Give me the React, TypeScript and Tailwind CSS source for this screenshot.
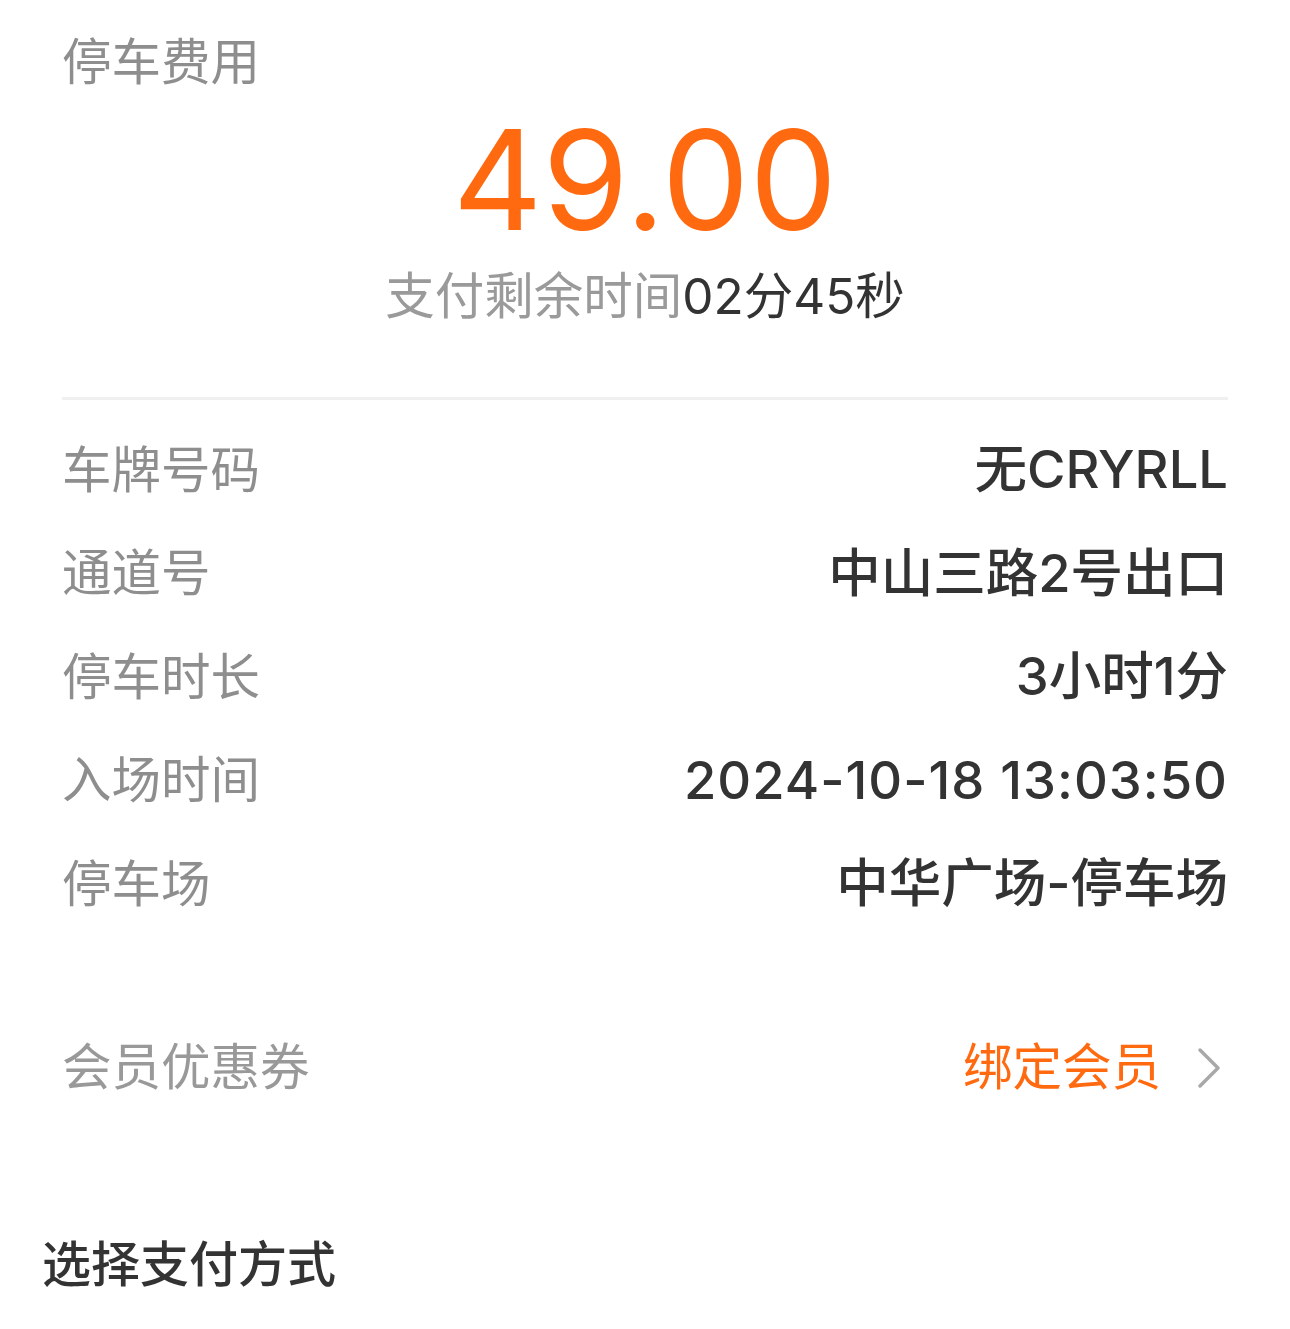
import React from "react"

const rows = [
  { label: "车牌号码", value: "无CRYRLL" },
  { label: "通道号", value: "中山三路2号出口" },
  { label: "停车时长", value: "3小时1分" },
  { label: "入场时间", value: "2024-10-18 13:03:50", wide: true },
  { label: "停车场", value: "中华广场-停车场" },
]

export default function App() {
  return (
    <div
      className="w-[1290px] min-h-[1329px] bg-white"
      style={{ fontFamily: 'Inter, "Noto Sans CJK SC", sans-serif' }}
    >
      <div className="px-[62px]">
        {/* Fee header */}
        <div className="mt-[30px] h-[64px] flex items-center text-[49.5px] text-[#8e8e8e]">停车费用</div>
        <div className="h-[170px] flex items-center justify-center text-[139px] leading-none text-[#ff6a10]">
          49.00
        </div>
        <div className="h-[64px] flex items-center justify-center text-[49.5px]">
          <span className="text-[#9a9a9a]">支付剩余时间</span>
          <span className="text-[#333333]">02分45秒</span>
        </div>

        <div className="mt-[69px] h-[3px] bg-[#f0f0f0]" />

        {/* Details */}
        <div className="mt-[18px]">
          {rows.map((r) => (
            <div key={r.label} className="h-[103.5px] flex items-center justify-between">
              <span className="text-[49.5px] text-[#8e8e8e]">{r.label}</span>
              <span className={"text-[52.5px] font-medium text-[#333333] " + (r.wide ? "tracking-[1px]" : "")}>
                {r.value}
              </span>
            </div>
          ))}
        </div>

        {/* Member coupon */}
        <div className="mt-[80px] h-[104px] flex items-center justify-between text-[49.5px]">
          <span className="text-[#999999]">会员优惠券</span>
          <div className="flex items-center">
            <span className="text-[#ff6a10]">绑定会员</span>
            <svg width="26" height="42" viewBox="0 0 26 42" className="ml-[36px] mr-[5px]">
              <polyline points="3,3 21,21 3,39" fill="none" stroke="#a8a8a8" strokeWidth="3.5" strokeLinecap="round" strokeLinejoin="round" />
            </svg>
          </div>
        </div>
      </div>

      <div className="mt-[113px] px-[42px] h-[64px] flex items-center text-[49px] font-medium text-[#333333]">
        选择支付方式
      </div>
    </div>
  )
}
